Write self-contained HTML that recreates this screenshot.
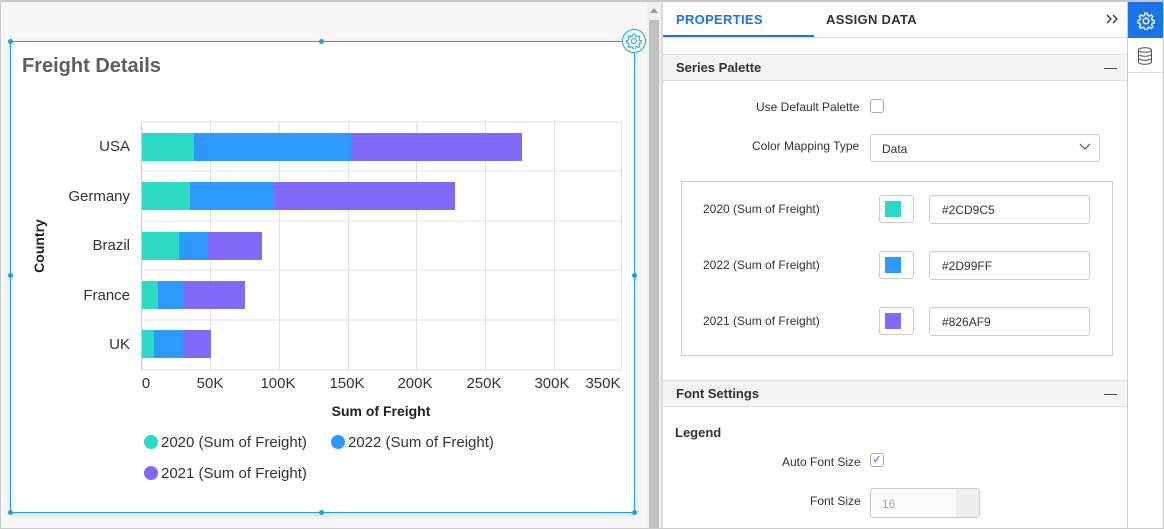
<!DOCTYPE html>
<html><head><style>
*{box-sizing:border-box;margin:0;padding:0}
body{width:1164px;height:529px;overflow:hidden;background:#fff;font-family:"Liberation Sans",Arial,sans-serif;position:relative}
.abs{position:absolute}
.lbl{font-size:12px;color:#333}
.hdr{background:#f4f4f4;border-top:1px solid #ddd;border-bottom:1px solid #ddd;font-weight:bold;font-size:13px;color:#333;padding-left:13px;line-height:25px}
.inp{border:1px solid #ccc;border-radius:3px;background:#fff;font-size:12px;color:#333}
</style></head><body>
<div class="abs" style="left:0;top:0;width:1164px;height:529px;border:1px solid #ccc;border-top:2px solid #c8c8c8"></div>
<div class="abs" style="left:1px;top:2px;width:646px;height:526px;background:#f7f7f7"></div>
<div class="abs" style="left:647px;top:2px;width:14px;height:526px;background:#f0f0f0"></div>
<div class="abs" style="left:649px;top:20px;width:10px;height:508px;background:#c1c1c1"></div>
<div class="abs" style="left:650px;top:8px;width:0;height:0;border-left:4px solid transparent;border-right:4px solid transparent;border-bottom:5px solid #999"></div>
<div class="abs" style="left:661px;top:2px;width:2px;height:526px;background:#ddd"></div>
<div class="abs" style="left:10px;top:41px;width:625px;height:472px;background:#fff;border:1px solid #1aa1e0;box-shadow:0 2px 6px rgba(0,0,0,.12)"></div>
<div class="abs" style="left:8px;top:39px;width:5px;height:5px;border-radius:50%;background:#1aa1e0"></div>
<div class="abs" style="left:319px;top:39px;width:5px;height:5px;border-radius:50%;background:#1aa1e0"></div>
<div class="abs" style="left:8px;top:273px;width:5px;height:5px;border-radius:50%;background:#1aa1e0"></div>
<div class="abs" style="left:632px;top:273px;width:5px;height:5px;border-radius:50%;background:#1aa1e0"></div>
<div class="abs" style="left:8px;top:510px;width:5px;height:5px;border-radius:50%;background:#1aa1e0"></div>
<div class="abs" style="left:319px;top:510px;width:5px;height:5px;border-radius:50%;background:#1aa1e0"></div>
<div class="abs" style="left:632px;top:510px;width:5px;height:5px;border-radius:50%;background:#1aa1e0"></div>
<div class="abs" style="left:622px;top:29px;width:24px;height:24px;border-radius:50%;background:#fff;border:1px solid #1aa1e0"></div>
<svg class="abs" style="left:626px;top:33px" width="16" height="16" viewBox="0 0 16 16"><circle cx="8" cy="8" r="2.5" fill="none" stroke="#1aa1e0" stroke-width="1"/><path d="M7,1h2l.4,2 1.5.7 1.7-1.1 1.4 1.4-1.1 1.7.7 1.5 2 .4v2l-2 .4-.7 1.5 1.1 1.7-1.4 1.4-1.7-1.1-1.5.7-.4 2h-2l-.4-2-1.5-.7-1.7 1.1-1.4-1.4 1.1-1.7-.7-1.5-2-.4v-2l2-.4.7-1.5-1.1-1.7 1.4-1.4 1.7 1.1 1.5-.7z" fill="none" stroke="#1aa1e0" stroke-width="1"/></svg>
<div class="abs" style="left:22px;top:55px;font-size:20px;font-weight:bold;color:#5e5e5e">Freight Details</div>
<svg class="abs" style="left:0;top:0" width="640" height="520">
<g stroke="#e0e0e0" stroke-width="1">
<line x1="142" y1="122" x2="621" y2="122" stroke-width="2" stroke="#eee"/>
<line x1="142" y1="171" x2="621" y2="171"/><line x1="142" y1="221" x2="621" y2="221"/>
<line x1="142" y1="270" x2="621" y2="270"/><line x1="142" y1="320" x2="621" y2="320"/>
<line x1="142" y1="370" x2="621" y2="370" stroke-width="2" stroke="#eee"/>
<line x1="210.5" y1="122" x2="210.5" y2="370"/><line x1="279.5" y1="122" x2="279.5" y2="370"/>
<line x1="348.5" y1="122" x2="348.5" y2="370"/><line x1="416.5" y1="122" x2="416.5" y2="370"/>
<line x1="485.5" y1="122" x2="485.5" y2="370"/><line x1="554.5" y1="122" x2="554.5" y2="370"/>
<line x1="621.5" y1="122" x2="621.5" y2="370"/>
<line x1="141.5" y1="122" x2="141.5" y2="370" stroke="#ccc"/>
</g>
<g>
<rect x="142" y="133" width="52" height="28" fill="#2cd9c5"/><rect x="194" y="133" width="157" height="28" fill="#2d99ff"/><rect x="351" y="133" width="171" height="28" fill="#826af9"/>
<rect x="142" y="182" width="48" height="28" fill="#2cd9c5"/><rect x="190" y="182" width="83" height="28" fill="#2d99ff"/><rect x="273" y="182" width="182" height="28" fill="#826af9"/>
<rect x="142" y="232" width="37" height="28" fill="#2cd9c5"/><rect x="179" y="232" width="29" height="28" fill="#2d99ff"/><rect x="208" y="232" width="54" height="28" fill="#826af9"/>
<rect x="142" y="281" width="16" height="28" fill="#2cd9c5"/><rect x="158" y="281" width="26" height="28" fill="#2d99ff"/><rect x="184" y="281" width="61" height="28" fill="#826af9"/>
<rect x="142" y="330" width="12" height="28" fill="#2cd9c5"/><rect x="154" y="330" width="29" height="28" fill="#2d99ff"/><rect x="183" y="330" width="28" height="28" fill="#826af9"/>
</g>
<g font-family="Liberation Sans,Arial,sans-serif" font-size="15" fill="#333" text-anchor="end">
<text x="130" y="151">USA</text><text x="130" y="201">Germany</text><text x="130" y="250">Brazil</text><text x="130" y="300">France</text><text x="130" y="349">UK</text>
</g>
<g font-family="Liberation Sans,Arial,sans-serif" font-size="15" fill="#333" text-anchor="middle">
<text x="146" y="388">0</text><text x="210" y="388">50K</text><text x="278" y="388">100K</text><text x="347" y="388">150K</text><text x="415" y="388">200K</text><text x="484" y="388">250K</text><text x="552" y="388">300K</text><text x="603" y="388">350K</text>
</g>
<text x="381" y="416" text-anchor="middle" font-family="Liberation Sans,Arial,sans-serif" font-size="14" font-weight="bold" fill="#222">Sum of Freight</text>
<text transform="translate(44,246) rotate(-90)" text-anchor="middle" font-family="Liberation Sans,Arial,sans-serif" font-size="14" font-weight="bold" fill="#222">Country</text>
<g font-family="Liberation Sans,Arial,sans-serif" font-size="15" fill="#333">
<circle cx="151" cy="442" r="7" fill="#2cd9c5"/><text x="161" y="447">2020 (Sum of Freight)</text>
<circle cx="338" cy="442" r="7" fill="#2d99ff"/><text x="348" y="447">2022 (Sum of Freight)</text>
<circle cx="151" cy="473" r="7" fill="#826af9"/><text x="161" y="478">2021 (Sum of Freight)</text>
</g>
</svg>
<div class="abs" style="left:663px;top:2px;width:464px;height:36px;border-bottom:1px solid #ddd;background:#fff"></div>
<div class="abs" style="left:676px;top:12px;font-size:13px;font-weight:bold;color:#1a73e8;letter-spacing:.3px">PROPERTIES</div>
<div class="abs" style="left:663px;top:35px;width:151px;height:2px;background:#1a73e8"></div>
<div class="abs" style="left:826px;top:12px;font-size:13px;font-weight:bold;color:#333;letter-spacing:.3px">ASSIGN DATA</div>
<svg class="abs" style="left:1106px;top:14px" width="14" height="10"><path d="M1,1 5,5 1,9M7,1 11,5 7,9" fill="none" stroke="#333" stroke-width="1.3"/></svg>
<div class="abs" style="left:663px;top:54px;width:464px"><div class="hdr">Series Palette<span style="float:right;margin-right:10px;font-weight:normal">—</span></div></div>
<div class="abs lbl" style="left:756px;top:100px">Use Default Palette</div>
<div class="abs" style="left:870px;top:99px;width:14px;height:14px;border:1px solid #aaa;border-radius:3px"></div>
<div class="abs lbl" style="left:752px;top:139px">Color Mapping Type</div>
<div class="abs inp" style="left:870px;top:134px;width:230px;height:28px;padding:7px 0 0 11px">Data</div>
<svg class="abs" style="left:1079px;top:143px" width="12" height="8"><path d="M1,1 6,6 11,1" fill="none" stroke="#555" stroke-width="1.2"/></svg>
<div class="abs" style="left:681px;top:181px;width:432px;height:175px;border:1px solid #ccc"></div>
<div class="abs lbl" style="left:703px;top:202px">2020 (Sum of Freight)</div>
<div class="abs lbl" style="left:703px;top:258px">2022 (Sum of Freight)</div>
<div class="abs lbl" style="left:703px;top:314px">2021 (Sum of Freight)</div>
<div class="abs inp" style="left:879px;top:195px;width:35px;height:28px"><div style="margin:5px;width:16px;height:16px;background:#2cd9c5"></div></div>
<div class="abs inp" style="left:879px;top:251px;width:35px;height:28px"><div style="margin:5px;width:16px;height:16px;background:#2d99ff"></div></div>
<div class="abs inp" style="left:879px;top:307px;width:35px;height:28px"><div style="margin:5px;width:16px;height:16px;background:#826af9"></div></div>
<div class="abs inp" style="left:929px;top:195px;width:161px;height:29px;padding:7px 0 0 12px">#2CD9C5</div>
<div class="abs inp" style="left:929px;top:251px;width:161px;height:29px;padding:7px 0 0 12px">#2D99FF</div>
<div class="abs inp" style="left:929px;top:307px;width:161px;height:29px;padding:7px 0 0 12px">#826AF9</div>
<div class="abs" style="left:663px;top:380px;width:464px"><div class="hdr">Font Settings<span style="float:right;margin-right:10px;font-weight:normal">—</span></div></div>
<div class="abs" style="left:675px;top:425px;font-size:13px;font-weight:bold;color:#333">Legend</div>
<div class="abs lbl" style="left:782px;top:455px">Auto Font Size</div>
<div class="abs" style="left:870px;top:453px;width:14px;height:14px;border:1px solid #aaa;border-radius:3px;font-size:11px;color:#1a73e8;line-height:12px;text-align:center">✓</div>
<div class="abs lbl" style="left:810px;top:494px">Font Size</div>
<div class="abs inp" style="left:870px;top:488px;width:110px;height:30px;padding:8px 0 0 11px;color:#aaa;background:#fafafa">16</div>
<div class="abs" style="left:956px;top:489px;width:23px;height:28px;background:#eee"></div>
<div class="abs" style="left:1127px;top:2px;width:1px;height:526px;background:#ccc"></div>
<div class="abs" style="left:1128px;top:2px;width:35px;height:36px;background:#1a73e8"></div>
<svg class="abs" style="left:1137px;top:12px" width="18" height="18" viewBox="0 0 16 16"><circle cx="8" cy="8" r="2.5" fill="none" stroke="#fff" stroke-width="1.2"/><path d="M7,1h2l.4,2 1.5.7 1.7-1.1 1.4 1.4-1.1 1.7.7 1.5 2 .4v2l-2 .4-.7 1.5 1.1 1.7-1.4 1.4-1.7-1.1-1.5.7-.4 2h-2l-.4-2-1.5-.7-1.7 1.1-1.4-1.4 1.1-1.7-.7-1.5-2-.4v-2l2-.4.7-1.5-1.1-1.7 1.4-1.4 1.7 1.1 1.5-.7z" fill="none" stroke="#fff" stroke-width="1.2"/></svg>
<svg class="abs" style="left:1137px;top:47px" width="16" height="18" viewBox="0 0 16 18"><ellipse cx="8" cy="3" rx="6.5" ry="2.3" fill="none" stroke="#555"/><path d="M1.5,3v12c0,1.3 2.9,2.3 6.5,2.3s6.5-1 6.5-2.3V3M1.5,7c0,1.3 2.9,2.3 6.5,2.3s6.5-1 6.5-2.3M1.5,11c0,1.3 2.9,2.3 6.5,2.3s6.5-1 6.5-2.3" fill="none" stroke="#555"/></svg>
<div class="abs" style="left:1128px;top:72px;width:35px;height:1px;background:#ddd"></div>
</body></html>
